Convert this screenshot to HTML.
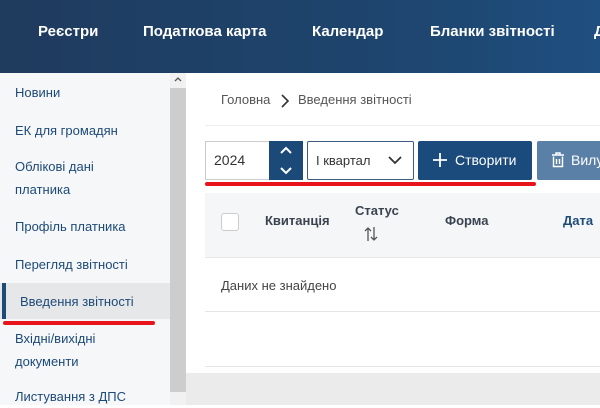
<!DOCTYPE html>
<html><head><meta charset="utf-8"><style>
*{margin:0;padding:0;box-sizing:border-box}
body{width:600px;height:405px;overflow:hidden;position:relative;font-family:"Liberation Sans","DejaVu Sans",sans-serif;background:#fff}
.hdr{position:absolute;left:0;top:0;width:600px;height:73px;background:linear-gradient(90deg,#1f3b5e,#1e4670 70%,#1f4f80)}
.hdr span{position:absolute;top:23px;color:#fff;font-weight:bold;font-size:15px}
.side{position:absolute;left:0;top:73px;width:170px;height:332px;background:#f5f7f9}
.side div{position:absolute;left:15px;color:#1e4a78;font-size:13px;line-height:23px}
.sb{position:absolute;left:170px;top:73px;width:16px;height:332px;background:#f1f1f1}
.thumb{position:absolute;left:170px;top:88px;width:16px;height:304px;background:#cdcdcd}
.abs{position:absolute}
.th{position:absolute;font-weight:bold;font-size:13px;color:#3a4450}
</style></head><body>
<div class="hdr">
<span style="left:38px">Реєстри</span>
<span style="left:143px">Податкова карта</span>
<span style="left:312px">Календар</span>
<span style="left:430px">Бланки звітності</span>
<span style="left:594px">Д</span>
</div>
<div class="side">
<div style="top:8px">Новини</div>
<div style="top:46px">ЕК для громадян</div>
<div style="top:82px">Облікові дані<br>платника</div>
<div style="top:142px">Профіль платника</div>
<div style="top:180px">Перегляд звітності</div>
<div style="left:0;top:210px;width:170px;height:36px;background:#e6e7e9"></div>
<div style="left:2px;top:210px;width:4px;height:36px;background:#1e4a78"></div>
<div style="left:20px;top:217px">Введення звітності</div>
<div style="left:3px;top:248px;width:152px;height:4px;background:#e8141b;border-radius:2px"></div>
<div style="top:254px">Вхідні/вихідні<br>документи</div>
<div style="top:312px">Листування з ДПС</div>
</div>
<div class="sb"></div><div class="thumb"></div>
<svg class="abs" style="left:174px;top:76px" width="8" height="6"><path d="M1 5l3-3 3 3" stroke="#555" stroke-width="1.3" fill="none"/></svg>
<div class="abs" style="left:186px;top:373px;width:414px;height:32px;background:#ebebec"></div>
<div class="abs" style="left:221px;top:92px;font-size:13px;color:#555">Головна</div>
<svg class="abs" style="left:280px;top:94px" width="10" height="14"><path d="M2 1l6 6-6 6" stroke="#333" stroke-width="1.6" fill="none"/></svg>
<div class="abs" style="left:298px;top:92px;font-size:13px;color:#555">Введення звітності</div>
<div class="abs" style="left:205px;top:125px;width:395px;height:1px;background:#eee"></div>
<div class="abs" style="left:205px;top:141px;width:68px;height:39px;border:1px solid #ccc;font-size:14px;color:#333;padding:10px 0 0 8px">2024</div>
<div class="abs" style="left:269px;top:141px;width:34px;height:39px;background:#1b4a79"></div>
<svg class="abs" style="left:279px;top:145px" width="14" height="32"><path d="M2 8l5-5 5 5M2 23l5 5 5-5" stroke="#fff" stroke-width="2" fill="none"/></svg>
<div class="abs" style="left:307px;top:141px;width:107px;height:39px;border:1px solid #3b5d82;border-radius:2px;font-size:13px;color:#333;padding:11px 0 0 8px">І квартал</div>
<svg class="abs" style="left:387px;top:154px" width="16" height="12"><path d="M2 3l6 6 6-6" stroke="#333" stroke-width="1.8" fill="none"/></svg>
<div class="abs" style="left:418px;top:141px;width:114px;height:39px;background:#1b4b7c;border-radius:2px;color:#fff;font-size:14px;padding:11px 0 0 37px">Створити</div>
<svg class="abs" style="left:432px;top:152px" width="16" height="16"><path d="M8 1v14M1 8h14" stroke="#fff" stroke-width="1.8"/></svg>
<div class="abs" style="left:537px;top:141px;width:70px;height:39px;background:#5b80a8;border-radius:2px;color:#fff;font-size:14px;padding:11px 0 0 34px">Вилу</div>
<svg class="abs" style="left:551px;top:152px" width="14" height="16"><path d="M1 3h12M5 3V1h4v2M2.5 4.5v10h9v-10M5.5 7v5M8.5 7v5" stroke="#fff" stroke-width="1.4" fill="none"/></svg>
<div class="abs" style="left:205px;top:182px;width:331px;height:4px;background:#e8141b;border-radius:2px"></div>
<div class="abs" style="left:205px;top:193px;width:395px;height:65px;background:#f5f6f8;border-bottom:1px solid #e6e6e6"></div>
<div class="abs" style="left:221px;top:213px;width:18px;height:18px;border:1px solid #ccc;border-radius:3px;background:#fff"></div>
<div class="th" style="left:265px;top:213px">Квитанція</div>
<div class="th" style="left:355px;top:203px">Статус</div>
<svg class="abs" style="left:363px;top:226px" width="16" height="16"><path d="M5 15V2M2 5l3-3 3 3M11 1v13M8 11l3 3 3-3" stroke="#555" stroke-width="1.3" fill="none"/></svg>
<div class="th" style="left:445px;top:213px">Форма</div>
<div class="th" style="left:563px;top:213px;color:#1e4a78">Дата</div>
<div class="abs" style="left:221px;top:278px;font-size:13px;color:#444">Даних не знайдено</div>
<div class="abs" style="left:205px;top:311px;width:395px;height:1px;background:#e6e6e6"></div>
<div class="abs" style="left:205px;top:366px;width:395px;height:1px;background:#e6e6e6"></div>
</body></html>
